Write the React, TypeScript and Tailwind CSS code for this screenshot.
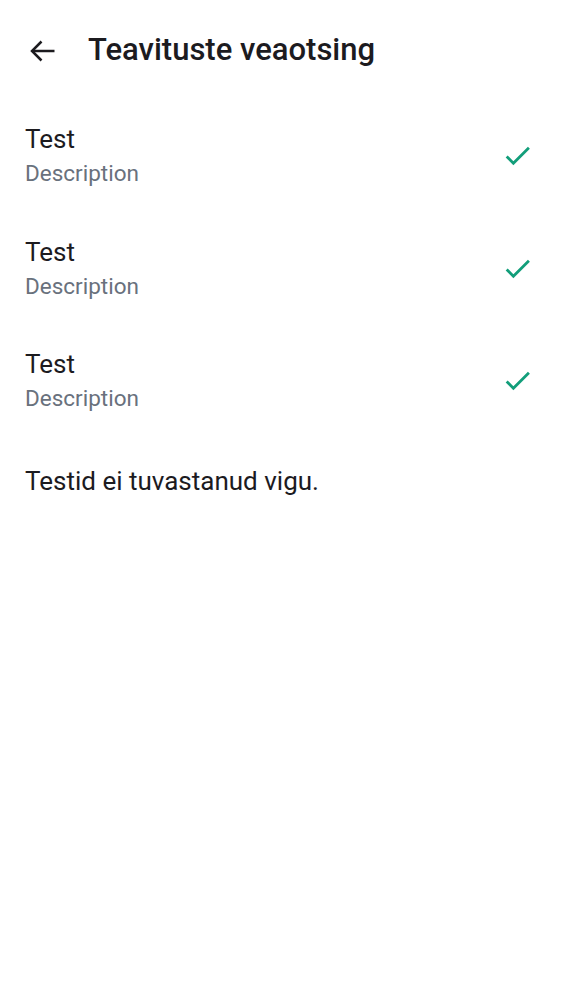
import React from "react";

function Row() {
  return (
    <div className="flex items-center justify-between pl-[25px] pr-[28px] h-[112.5px]">
      <div className="flex flex-col">
        <span className="text-[26px] leading-[32px] text-[#1c1b1f]">Test</span>
        <span className="text-[22.5px] leading-[36px] text-[#69717d]">Description</span>
      </div>
      <svg width="33" height="33" viewBox="0 0 24 24" className="mt-[-3px]">
        <path d="M9 16.17L4.83 12l-1.42 1.41L9 19 21 7l-1.41-1.41z" fill="#129e7a" />
      </svg>
    </div>
  );
}

export default function App() {
  return (
    <div className="w-[562px] h-[1000px] bg-white" style={{ fontFamily: "Roboto, 'Noto Sans', sans-serif" }}>
      <div className="flex items-start h-[101px] pl-[30px]">
        <svg width="26" height="24" viewBox="0 0 26 24" className="mt-[38.5px]" fill="none" stroke="#1c1b1f" strokeWidth="2.5">
          <path d="M2 12H24.5" />
          <path d="M11.5 2.5L2 12l9.5 9.5" />
        </svg>
        <h1 className="ml-[32px] mt-[32px] text-[31px] font-medium text-[#1c1b1f] leading-[36px]">Teavituste veaotsing</h1>
      </div>
      <Row />
      <Row />
      <Row />
      <p className="mt-[26.5px] pl-[25px] text-[26px] leading-[32px] text-[#1c1b1f]">Testid ei tuvastanud vigu.</p>
    </div>
  );
}
